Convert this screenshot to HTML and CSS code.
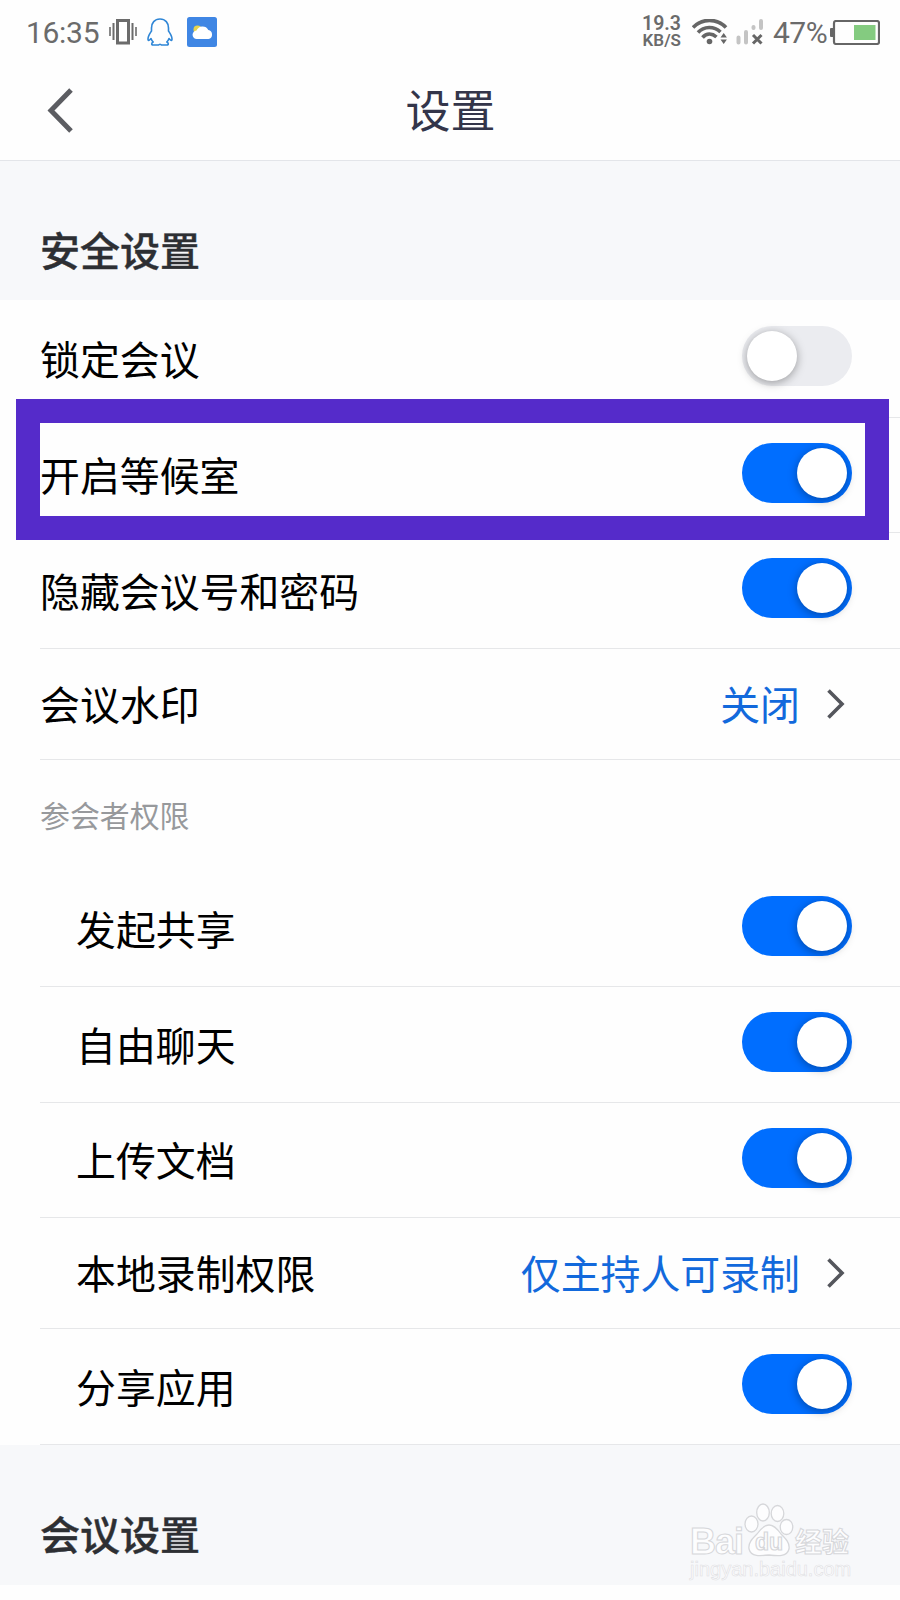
FILE: index.html
```html
<!DOCTYPE html>
<html lang="zh-CN">
<head>
	<meta charset="utf-8">
	<title>设置</title>
	<meta name="viewport" content="width=device-width, initial-scale=1.0">
	<link rel="stylesheet" href="styles.css">
</head>
<body>
	<div class="statusbar">
		<div class="status-left">
			<span class="clock">16:35</span>
			<svg class="vibrate" width="28" height="26" viewBox="0 0 28 26" fill="none" stroke="#6b6b6b">
				<rect x="8.5" y="1.5" width="11" height="22.5" stroke-width="3"/>
				<path d="M4.5 4v17M23.5 4v17" stroke-width="2"/>
				<path d="M1 8v9M27 8v9" stroke-width="1.6"/>
			</svg>
			<svg class="penguin" width="26" height="28" viewBox="0 0 26 28" fill="none" stroke="#2f86d6" stroke-width="1.6" stroke-linejoin="round">
				<path d="M13 1C7.500 1 4.500 5 4.500 10V13C2.500 16 1 18 1 21C1 23 2 23 4 20.500C4.500 22 5.200 23 6.200 24C4.500 25 4 26.800 6 27H11C12 27 12.300 26.300 13 26.300C13.700 26.300 14 27 15 27H20C22 26.800 21.500 25 19.800 24C20.800 23 21.500 22 22 20.500C24 23 25 23 25 21C25 18 23.500 16 21.500 13V10C21.500 5 18.500 1 13 1Z"/>
			</svg>
			<svg class="weather" width="30" height="30" viewBox="0 0 30 30">
				<rect width="30" height="30" rx="2.500" fill="#3f86e4"/>
				<circle cx="10.500" cy="12.500" r="4" fill="#e8d44d"/>
				<path d="M10 22a4.200 4.200 0 0 1-.5-8.400a6.500 6.500 0 0 1 11.800-.6a4.600 4.600 0 0 1 .2 9z" fill="#fff"/>
			</svg>
		</div>
		<div class="status-right">
			<div class="speed"><span>19.3</span><span>KB/S</span></div>
			<svg class="wifi" width="36" height="26" viewBox="0 0 36 26" fill="none" stroke="#666" stroke-width="3.600">
				<path d="M1 8.500C10-1 25-1 34 8.500"/>
				<path d="M6 13.500C12 7 22 7 28.500 13"/>
				<path d="M10.500 18.500C14.500 14 20 14 24.500 18"/>
				<circle cx="17.500" cy="22.500" r="2.800" fill="#666" stroke="none"/>
				<path d="M28.500 18.500l3.200-4.500 3.200 4.500zM28.500 20.500l3.200 4.500 3.200-4.500z" fill="#666" stroke="none"/>
			</svg>
			<svg class="signal" width="28" height="26" viewBox="0 0 28 26">
				<path d="M2.500 18.500v5M10 13v10.500M17.500 8v1M25 2v7" stroke="#c4c4c4" stroke-width="4" stroke-linecap="round"/>
				<path d="M17 16l8.500 8.500M25.500 16l-8.500 8.500" stroke="#666" stroke-width="3"/>
			</svg>
			<span class="percent">47%</span>
			<svg class="battery" width="50" height="25" viewBox="0 0 50 25">
				<rect x="0" y="8" width="4" height="9" rx="1" fill="#666"/>
				<rect x="4" y="1" width="45" height="23" rx="2" fill="none" stroke="#666" stroke-width="2.200"/>
				<rect x="24" y="5" width="21.500" height="15" fill="#84cb80"/>
			</svg>
		</div>
	</div>

	<div class="navbar">
		<svg class="back" width="26" height="45" viewBox="0 0 26 45" fill="none" stroke="#5c5d62" stroke-width="5">
			<path d="M24 2L4 22.500L24 43"/>
		</svg>
		<h1>设置</h1>
	</div>

	<h2 class="section">安全设置</h2>
	<div class="list">
		<div class="row first"><span class="label">锁定会议</span><span class="toggle off"></span></div>
		<div class="row wait"><span class="label">开启等候室</span><span class="toggle"></span><div class="highlight"></div></div>
		<div class="row"><span class="label">隐藏会议号和密码</span><span class="toggle"></span></div>
		<div class="row link"><span class="label">会议水印</span><span class="value">关闭</span>
			<svg class="arrow" width="18" height="30" viewBox="0 0 18 30"><path d="M1.500 1.500L15 15L1.500 28.500"/></svg>
		</div>
		<p class="group">参会者权限</p>
		<div class="row sub"><span class="label">发起共享</span><span class="toggle"></span></div>
		<div class="row sub"><span class="label">自由聊天</span><span class="toggle"></span></div>
		<div class="row sub short"><span class="label">上传文档</span><span class="toggle"></span></div>
		<div class="row sub link"><span class="label">本地录制权限</span><span class="value">仅主持人可录制</span>
			<svg class="arrow" width="18" height="30" viewBox="0 0 18 30"><path d="M1.500 1.500L15 15L1.500 28.500"/></svg>
		</div>
		<div class="row sub"><span class="label">分享应用</span><span class="toggle"></span></div>
	</div>
	<h2 class="section">会议设置</h2>

	<div class="watermark">
		<div class="mark-top">
			<span class="bai">Bai</span>
			<svg class="paw" width="50" height="54" viewBox="0 0 50 54" fill="#fdfdfe" stroke="#d6d7da" stroke-width="1.300">
				<ellipse cx="7.500" cy="21" rx="6.500" ry="8"/>
				<ellipse cx="19" cy="9.500" rx="6.300" ry="8.500"/>
				<ellipse cx="33.500" cy="10.500" rx="6.300" ry="8"/>
				<ellipse cx="42.500" cy="24" rx="6.300" ry="7.500"/>
				<path d="M25 22C20 22 16.500 26 13 31C8 36 4 40 5 46C7 54 16 53 25 52C34 53 43 54 45 46C46 40 42 36 37 31C33.500 26 30 22 25 22Z"/>
				<text x="25" y="47" text-anchor="middle">du</text>
			</svg>
			<span class="jy">经验</span>
		</div>
		<div class="site">jingyan.baidu.com</div>
	</div>
</body>
</html>
```
FILE: styles.css
```css
*{
	margin:0;
	padding:0;
	box-sizing:border-box;
}

body{
	position:relative;
	width:900px;
	height:1600px;
	overflow:hidden;
	background:#fefefe;
	font-family:"Noto Sans CJK SC", sans-serif;
	color:#000;
}

/* status bar */
.statusbar{
	display:flex;
	justify-content:space-between;
	height:64px;
	padding:0 20px 0 26px;
	font-family:Roboto, sans-serif;
	color:#6b6b6b;
}

.status-left, .status-right{
	display:flex;
	align-items:center;
	height:64px;
}

.clock{
	width:83px;
	font-size:30px;
	letter-spacing:-0.3px;
}

.penguin{
	margin-left:10px;
}

.weather{
	margin-left:14px;
}

.speed{
	display:flex;
	flex-direction:column;
	align-items:flex-end;
	font-size:19.5px;
	font-weight:600;
	line-height:16px;
}

.speed span + span{
	font-size:17px;
}

.wifi{
	margin-left:11px;
}

.signal{
	margin-left:8px;
}

.percent{
	margin-left:9px;
	width:57px;
	font-size:30px;
	letter-spacing:-0.5px;
}

/* title */
.navbar{
	display:flex;
	align-items:center;
	height:97px;
	padding:0 46px 4px 47px;
	border-bottom:1px solid #e3e5e9;
}

.navbar h1{
	flex:1;
	margin-right:26px;
	padding-bottom:3px;
	text-align:center;
	font-size:45px;
	font-weight:400;
	line-height:60px;
	color:#33354a;
}

.section{
	height:139px;
	padding:60px 40px 0;
	background:#f7f8fa;
	font-size:40px;
	font-weight:500;
	line-height:56px;
	color:#2d2f33;
	-webkit-text-stroke:.4px #2d2f33;
}

.section:last-of-type{
	height:140px;
}

/* settings rows */
.row{
	position:relative;
	display:flex;
	align-items:center;
	height:116px;
	margin-left:40px;
	padding-right:48px;
	border-bottom:1px solid #e6e7e9;
	font-size:39.9px;
	line-height:56px;
}

.row.first{
	height:118px;
}

.row.wait, .row.short{
	height:115px;
}

.row.link{
	height:111px;
	padding-right:55px;
}

.row.sub{
	padding-left:36px;
}

.label{
	flex:1;
	padding-bottom:2px;
}

.value{
	padding-bottom:2px;
	color:#1269dc;
}

.arrow{
	margin-left:27px;
	fill:none;
	stroke:#54565c;
	stroke-width:3.6;
}

.group{
	height:111px;
	padding:32px 40px 0;
	font-size:29.9px;
	line-height:44px;
	color:#97999c;
}

.toggle{
	width:110px;
	height:60px;
	margin-bottom:5px;
	padding:5px;
	border-radius:30px;
	background:#006eff;
}

.toggle::after{
	content:"";
	display:block;
	width:50px;
	height:50px;
	margin-left:50px;
	border-radius:50%;
	background:#fff;
	box-shadow:0 2px 10px rgba(0,0,0,.35);
}

.toggle.off{
	background:#ebecf0;
}

.toggle.off::after{
	margin-left:0;
}

/* frame drawn round the waiting room row */
.highlight{
	position:absolute;
	left:-24px;
	top:-19px;
	width:873px;
	height:141px;
	border:24px solid #552bca;
	z-index:2;
}

/* corner mark */
.watermark{
	position:absolute;
	left:690px;
	top:1503px;
	width:164px;
	color:#fdfdfe;
	-webkit-text-stroke:1px #d6d7da;
}

.mark-top{
	display:flex;
	align-items:flex-end;
	height:54px;
}

.bai{
	width:54px;
	font:bold 36px/40px "Liberation Sans", sans-serif;
	letter-spacing:-1px;
	margin-bottom:-5px;
}

.paw text{
	font:bold 23px "Liberation Sans", sans-serif;
	stroke-width:1.2;
}

.jy{
	font-size:27px;
	font-weight:700;
	line-height:34px;
	margin-left:1px;
	margin-bottom:-1px;
}

.site{
	font:20px/24px "Liberation Sans", sans-serif;
	-webkit-text-stroke:.6px #dfe0e3;
}
```
